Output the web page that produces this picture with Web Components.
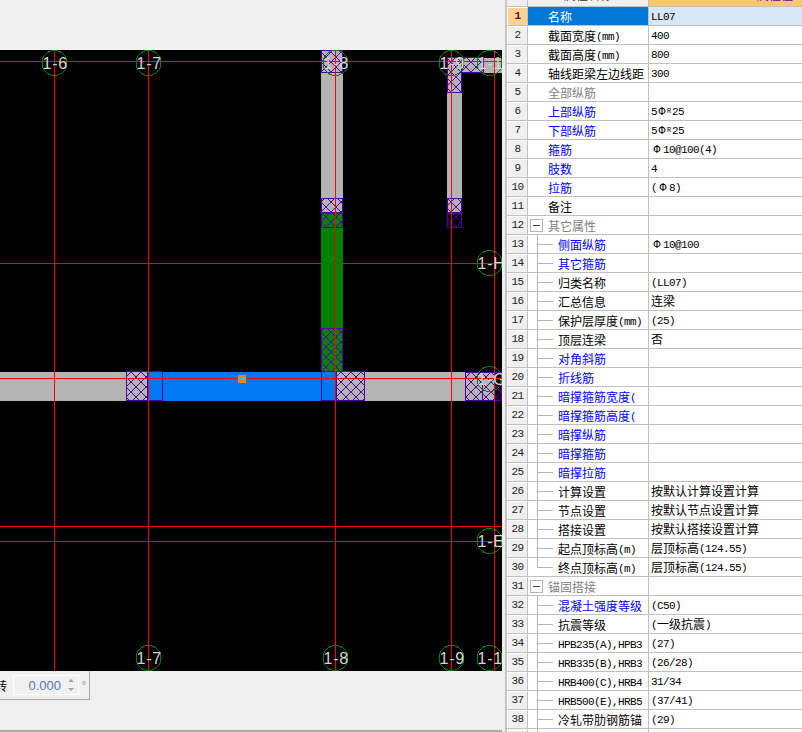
<!DOCTYPE html>
<html lang="zh">
<head>
<meta charset="utf-8">
<title>LL07</title>
<style>
    html, body{
        margin: 0;
        height: 100%;
        overflow: hidden;
        background: #f0f0f0;
    }
</style>
</head>
<body>
<app-shell>
    <drawing-canvas slot="canvas"></drawing-canvas>
    <rotate-panel slot="status"></rotate-panel>
    <prop-table slot="props">
        <prop-row num="1" label="名称" value="LL07" selected></prop-row>
        <prop-row num="2" label="截面宽度(mm)" value="400"></prop-row>
        <prop-row num="3" label="截面高度(mm)" value="800"></prop-row>
        <prop-row num="4" label="轴线距梁左边线距" value="300"></prop-row>
        <prop-row num="5" label="全部纵筋" tone="grey"></prop-row>
        <prop-row num="6" label="上部纵筋" value="5Φ{R}25" tone="blue"></prop-row>
        <prop-row num="7" label="下部纵筋" value="5Φ{R}25" tone="blue"></prop-row>
        <prop-row num="8" label="箍筋" value="Φ10@100(4)" tone="blue"></prop-row>
        <prop-row num="9" label="肢数" value="4" tone="blue"></prop-row>
        <prop-row num="10" label="拉筋" value="(Φ8)" tone="blue"></prop-row>
        <prop-row num="11" label="备注"></prop-row>
        <prop-row num="12" label="其它属性" tone="grey" tree="group"></prop-row>
        <prop-row num="13" label="侧面纵筋" value="Φ10@100" tone="blue" tree="child"></prop-row>
        <prop-row num="14" label="其它箍筋" tone="blue" tree="child"></prop-row>
        <prop-row num="15" label="归类名称" value="(LL07)" tree="child"></prop-row>
        <prop-row num="16" label="汇总信息" value="连梁" tree="child"></prop-row>
        <prop-row num="17" label="保护层厚度(mm)" value="(25)" tree="child"></prop-row>
        <prop-row num="18" label="顶层连梁" value="否" tree="child"></prop-row>
        <prop-row num="19" label="对角斜筋" tone="blue" tree="child"></prop-row>
        <prop-row num="20" label="折线筋" tone="blue" tree="child"></prop-row>
        <prop-row num="21" label="暗撑箍筋宽度(" tone="blue" tree="child"></prop-row>
        <prop-row num="22" label="暗撑箍筋高度(" tone="blue" tree="child"></prop-row>
        <prop-row num="23" label="暗撑纵筋" tone="blue" tree="child"></prop-row>
        <prop-row num="24" label="暗撑箍筋" tone="blue" tree="child"></prop-row>
        <prop-row num="25" label="暗撑拉筋" tone="blue" tree="child"></prop-row>
        <prop-row num="26" label="计算设置" value="按默认计算设置计算" tree="child"></prop-row>
        <prop-row num="27" label="节点设置" value="按默认节点设置计算" tree="child"></prop-row>
        <prop-row num="28" label="搭接设置" value="按默认搭接设置计算" tree="child"></prop-row>
        <prop-row num="29" label="起点顶标高(m)" value="层顶标高(124.55)" tree="child"></prop-row>
        <prop-row num="30" label="终点顶标高(m)" value="层顶标高(124.55)" tree="last"></prop-row>
        <prop-row num="31" label="锚固搭接" tone="grey" tree="group"></prop-row>
        <prop-row num="32" label="混凝土强度等级" value="(C50)" tone="blue" tree="child"></prop-row>
        <prop-row num="33" label="抗震等级" value="(一级抗震)" tree="child"></prop-row>
        <prop-row num="34" label="HPB235(A),HPB3" value="(27)" tree="child"></prop-row>
        <prop-row num="35" label="HRB335(B),HRB3" value="(26/28)" tree="child"></prop-row>
        <prop-row num="36" label="HRB400(C),HRB4" value="31/34" tree="child"></prop-row>
        <prop-row num="37" label="HRB500(E),HRB5" value="(37/41)" tree="child"></prop-row>
        <prop-row num="38" label="冷轧带肋钢筋锚" value="(29)" tree="child"></prop-row>
        <prop-row tree="child"></prop-row>
    </prop-table>
</app-shell>

<script>
class AppShell extends HTMLElement{
    constructor(){
        super()
        this.attachShadow({mode: 'open'}).innerHTML = `
            <style>
                :host{
                    display: flex;
                    width: 802px;
                    height: 732px;
                    overflow: hidden;
                    background: #f0f0f0;
                }
                .left{
                    width: 502px;
                    display: flex;
                    flex-direction: column;
                }
                .top{
                    height: 50px;
                }
                .bottom{
                    height: 59px;
                    border-bottom: 2px solid #a8a8a8;
                }
                .split{
                    width: 3px;
                    border-right: 2px solid #c4c4c4;
                }
                .right{
                    flex: 1;
                    min-width: 0;
                }
            </style>
            <div class="left">
                <div class="top"></div>
                <slot name="canvas"></slot>
                <div class="bottom"><slot name="status"></slot></div>
            </div>
            <div class="split"></div>
            <div class="right"><slot name="props"></slot></div>
        `
    }
}

class DrawingCanvas extends HTMLElement{
    constructor(){
        super()
        const _grey = '#b4b4b4'
        const _blue = '#0078f0'
        const _green = '#008000'
        const _purple = '#5000a0'

        const rect = (x, y, w, h, fill) => `<rect x="${x}" y="${y}" width="${w}" height="${h}" fill="${fill}"/>`
        const outline = (x, y, w, h) => `<rect x="${x + 0.5}" y="${y + 0.5}" width="${w - 1}" height="${h - 1}" fill="none" stroke="${_purple}"/>`
        const hatch = (x, y, w, h, fill) => `
            ${fill ? rect(x, y, w, h, fill) : ''}
            <rect x="${x}" y="${y}" width="${w}" height="${h}" fill="url(#hatch)"/>
            ${outline(x, y, w, h)}`

        const axisX = [54, 148, 335, 451, 494]
        const axisY = [61, 263, 378, 526, 541]
        const bubbles = [
            [54, 63, '1-6'], [148, 63, '1-7'], [335, 63, '1-8'], [451, 63, '1-9'], [489, 63, '1-10'],
            [489, 263, '1-H'], [489, 379, '1-G'], [489, 541, '1-E'],
            [148, 658, '1-7'], [335, 658, '1-8'], [451, 658, '1-9'], [489, 658, '1-10']
        ]

        this.attachShadow({mode: 'open'}).innerHTML = `
            <style>
                :host{
                    display: block;
                    width: 502px;
                    height: 621px;
                    background: #000;
                }
                svg{
                    display: block;
                }
                text{
                    font: 16px "Liberation Sans", sans-serif;
                    letter-spacing: 0.8px;
                    fill: #d4d4d4;
                }
                circle{
                    shape-rendering: crispEdges;
                }
            </style>
            <svg width="502" height="621" viewBox="0 50 502 621">
                <defs>
                    <pattern id="hatch" patternUnits="userSpaceOnUse" width="10" height="10" x="1" y="2">
                        <path d="M0 0L10 10M10 0L0 10" stroke="${_purple}" stroke-width="1" fill="none" shape-rendering="crispEdges"/>
                    </pattern>
                </defs>

                ${rect(0, 372, 502, 29, _grey)}
                ${rect(148, 372, 188, 29, _blue)}

                ${rect(321, 73, 22, 125, _grey)}
                ${hatch(321, 50, 22, 23, _grey)}
                ${hatch(321, 198, 22, 15, _grey)}
                ${hatch(321, 213, 22, 15, _green)}
                ${rect(321, 228, 22, 100, _green)}
                ${hatch(321, 328, 22, 44, _green)}

                ${rect(447, 93, 15, 105, _grey)}
                ${rect(484, 58, 18, 15, _grey)}
                ${hatch(447, 57, 37, 16, _grey)}
                ${hatch(447, 57, 15, 36, _grey)}
                ${hatch(447, 198, 15, 15, _grey)}
                ${hatch(447, 213, 15, 15, '')}

                ${hatch(126, 371, 22, 30, _grey)}
                ${outline(126, 371, 37, 30)}
                ${hatch(336, 371, 29, 30, _grey)}
                ${outline(321, 371, 44, 30)}
                ${rect(494, 372, 8, 29, '#000')}
                ${hatch(465, 372, 37, 29, '')}
                ${outline(465, 372, 18, 29)}

                ${rect(238, 375, 8, 8, '#ff8000')}

                ${axisX.map(x => rect(x, 50, 1, 621, '#ff0000')).join('')}
                ${axisY.map(y => rect(0, y, 502, 1, '#ff0000')).join('')}
                ${rect(238, 378, 8, 1, '#00e0e0')}

                ${bubbles.map(([x, y, t]) => `
                    <circle cx="${x + 0.5}" cy="${y}" r="12.5" fill="none" stroke="${_green}"/>
                    <text x="${x - 11.5}" y="${y + 6}">${t}</text>
                `).join('')}
            </svg>
        `
    }
}

class RotatePanel extends HTMLElement{
    constructor(){
        super()
        this.attachShadow({mode: 'open'}).innerHTML = `
            <style>
                :host{
                    display: flex;
                    align-items: center;
                    box-sizing: border-box;
                    width: 90px;
                    height: 29px;
                    border: solid #a8a8a8;
                    border-width: 0 1px 1px 0;
                    overflow: hidden;
                    font: 12px "Noto Sans CJK SC", sans-serif;
                    color: #000;
                }
                .cap{
                    margin-left: -5px;
                    width: 18px;
                    flex: none;
                }
                .box{
                    box-sizing: border-box;
                    width: 66px;
                    height: 20px;
                    flex: none;
                    border: 1px solid #fff;
                    display: flex;
                    align-items: center;
                    justify-content: flex-end;
                }
                .val{
                    font: 13px "Liberation Sans", sans-serif;
                    color: #5878ac;
                    margin-right: 4px;
                }
                svg{
                    display: block;
                    margin-right: 1px;
                }
                .deg{
                    margin-left: 3px;
                    font: 10px "Liberation Sans", sans-serif;
                    color: #8a8a8a;
                }
            </style>
            <span class="cap">转</span>
            <div class="box">
                <span class="val">0.000</span>
                <svg width="12" height="16" viewBox="0 0 12 16">
                    <path d="M3 5L6 2L9 5Z M3 11L9 11L6 14Z" fill="#a4a4a4"/>
                </svg>
            </div>
            <span class="deg">°</span>
        `
    }
}

class PropTable extends HTMLElement{
    constructor(){
        super()
        this.attachShadow({mode: 'open'}).innerHTML = `
            <style>
                :host{
                    display: block;
                    margin-top: -12px;
                    background: #fff;
                    font: 12px "Noto Sans CJK SC", sans-serif;
                    color: #000;
                }
                .head{
                    display: grid;
                    grid-template-columns: 21px 121px 1fr;
                    height: 19px;
                    box-sizing: border-box;
                    border-bottom: 1px solid #c0c0c0;
                    line-height: 14px;
                }
                .head div{
                    border-right: 1px solid #c0c0c0;
                    background: #f0f0f0;
                    text-align: center;
                    color: #333;
                }
                .head div:last-child{
                    border-right: 0;
                    background: #f5c76e;
                    color: #6a0080;
                    text-align: left;
                    padding-left: 108px;
                }
            </style>
            <div class="head"><div></div><div>属性名称</div><div>属性值</div></div>
            <slot></slot>
        `
    }
}

class PropRow extends HTMLElement{
    constructor(){
        super()
        this.attachShadow({mode: 'open'})
    }

    // ascii runs get a tightened mono face so they sit on the 6px half width grid
    _rich(text){
        return (text || '')
            .replace(/Φ\{(\w+)\}|Φ|[\x20-\x7e]+/g, (m, sup) => {
                if(sup) return `<span class="rb tight">Φ</span><span class="sup">${sup}</span>`
                if(m == 'Φ') return '<span class="rb">Φ</span>'
                return `<span class="l">${m}</span>`
            })
    }

    _tree(){
        const kind = this.getAttribute('tree')
        if(!kind) return '<span class="tree"></span>'
        if(kind == 'group') return '<span class="tree group"><i></i></span>'
        return `<span class="tree ${kind}"></span>`
    }

    connectedCallback(){
        const tone = {blue: '#0000ff', grey: '#808080'}[this.getAttribute('tone')] || '#000'
        this.shadowRoot.innerHTML = `
            <style>
                :host{
                    display: grid;
                    grid-template-columns: 21px 121px 1fr;
                    height: 19px;
                    box-sizing: border-box;
                    border-bottom: 1px solid #c0c0c0;
                    line-height: 18px;
                    white-space: nowrap;
                }
                .num{
                    box-sizing: border-box;
                    border-right: 1px solid #c0c0c0;
                    border-top: 1px solid #fff;
                    border-left: 1px solid #fff;
                    background: #f0f0f0;
                    text-align: center;
                    font: 11px/16px "Liberation Mono", monospace;
                    letter-spacing: -0.6px;
                    color: #222;
                }
                .name{
                    box-sizing: border-box;
                    display: flex;
                    border-right: 1px solid #c0c0c0;
                    overflow: hidden;
                    color: ${tone};
                }
                .name b{
                    font-weight: normal;
                    padding-top: 1px;
                    line-height: 17px;
                }
                .val{
                    padding-left: 2px;
                    overflow: hidden;
                }
                .tree{
                    width: 20px;
                    flex: none;
                }
                .tree.child, .tree.last{
                    width: 30px;
                    background-repeat: no-repeat;
                    background-image: linear-gradient(#b4b4b4, #b4b4b4), linear-gradient(#b4b4b4, #b4b4b4);
                    background-position: 9px 0, 9px 9px;
                }
                .tree.child{
                    background-size: 1px 100%, 16px 1px;
                }
                .tree.last{
                    background-size: 1px 10px, 16px 1px;
                }
                .tree i{
                    display: block;
                    box-sizing: border-box;
                    width: 13px;
                    height: 13px;
                    margin: 3px 0 0 2px;
                    border: 1px solid #b4b4b4;
                    background: linear-gradient(#444, #444) center / 7px 1px no-repeat #fff;
                }
                .l{
                    font: 11px "Liberation Mono", monospace;
                    letter-spacing: -0.6px;
                    vertical-align: 1px;
                }
                .rb{
                    display: inline-block;
                    width: 10px;
                    margin: 0 1px;
                    text-align: center;
                    font: 10px "DejaVu Sans", sans-serif;
                    vertical-align: 1px;
                }
                .rb.tight{
                    width: 8px;
                }
                .sup{
                    display: inline-block;
                    width: 5px;
                    font: 7px "Liberation Mono", monospace;
                    vertical-align: 3px;
                }
                :host([selected]) .num{
                    background: #fdd28c;
                    color: #5b0060;
                    font-weight: bold;
                }
                :host([selected]) .name{
                    background: #0078d7;
                    color: #fff;
                }
                :host([selected]) .val{
                    background: #d6e8f7;
                }
            </style>
            <div class="num">${this.getAttribute('num') || ''}</div>
            <div class="name">${this._tree()}<b>${this._rich(this.getAttribute('label'))}</b></div>
            <div class="val">${this._rich(this.getAttribute('value'))}</div>
        `
    }
}

customElements.define('app-shell', AppShell)
customElements.define('drawing-canvas', DrawingCanvas)
customElements.define('rotate-panel', RotatePanel)
customElements.define('prop-table', PropTable)
customElements.define('prop-row', PropRow)
</script>
</body>
</html>
